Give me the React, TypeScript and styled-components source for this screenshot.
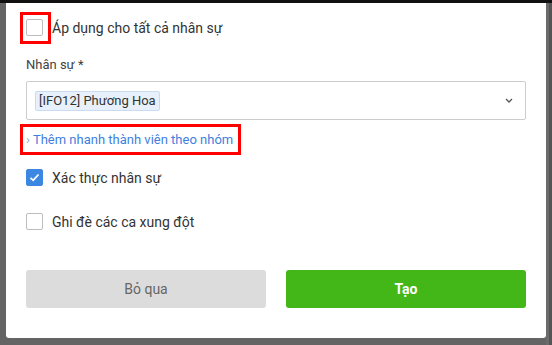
import styled, { createGlobalStyle } from "styled-components";

const GlobalStyle = createGlobalStyle`
  html, body {
    margin: 0;
    padding: 0;
    background: #646464;
  }
  body {
    font-family: Roboto, "Liberation Sans", Arial, sans-serif;
  }
  * {
    box-sizing: border-box;
  }
`;

const Screen = styled.div`
  width: 552px;
  height: 345px;
  display: flex;
  flex-direction: column;
  background: #646464;
  overflow: hidden;
`;

const TopBar = styled.div`
  height: 3px;
  background: #111111;
  flex-shrink: 0;
`;

const Body = styled.div`
  flex: 1;
  display: flex;
  flex-direction: row;
`;

const Modal = styled.div`
  width: 540px;
  height: 335px;
  margin-left: 6px;
  background: #ffffff;
  border-radius: 0 0 3px 3px;
  padding: 9px 20px 0 20px;
  display: flex;
  flex-direction: column;
`;

const Scrollbar = styled.div`
  width: 6px;
  background: linear-gradient(to right, #6b6b6b 0 3px, #555555 3px 6px);
`;

const Row = styled.div<{ mt?: number; height?: number }>`
  display: flex;
  flex-direction: row;
  align-items: center;
  margin-top: ${(p) => p.mt || 0}px;
  height: ${(p) => (p.height ? `${p.height}px` : "auto")};
`;

// red annotation frame drawn around a part of the form
const Marker = styled.div<{ width: number; height: number }>`
  width: ${(p) => p.width}px;
  height: ${(p) => p.height}px;
  margin-left: -6px;
  border: 3px solid #ff0000;
  padding-left: 3px;
  display: flex;
  align-items: center;
`;

const CheckMarker = styled(Marker)`
  align-items: flex-start;
  padding-top: 4px;
`;

const Box = styled.span<{ checked?: boolean }>`
  width: 17px;
  height: 17px;
  flex-shrink: 0;
  border-radius: 2px;
  border: 1px solid ${(p) => (p.checked ? "#3b87e2" : "#bdbdbd")};
  background: ${(p) => (p.checked ? "#3b87e2" : "#ffffff")};
  display: flex;
  align-items: center;
  justify-content: center;
`;

const OptionText = styled.span<{ ml?: number }>`
  margin-left: ${(p) => p.ml ?? 9}px;
  font-size: 14px;
  color: #333333;
  white-space: nowrap;
`;

const Label = styled.div`
  margin-top: 13px;
  font-size: 13px;
  line-height: 16px;
  color: #3f3f3f;
`;

const Select = styled.div`
  margin-top: 8px;
  height: 39px;
  border: 1px solid #cccccc;
  border-radius: 2px;
  padding: 0 12px 0 8px;
  display: flex;
  align-items: center;
  justify-content: space-between;
`;

const Tag = styled.span`
  height: 20px;
  padding: 0 3px;
  background: #e8f1fb;
  border: 1px solid #c8dbf1;
  border-radius: 2px;
  font-size: 13px;
  line-height: 18px;
  color: #333333;
  white-space: nowrap;
`;

const QuickLink = styled.a`
  font-size: 13px;
  color: #3f7fe0;
  text-decoration: none;
  white-space: nowrap;
`;

const Arrow = styled.span`
  color: #8aa8d8;
  margin-right: 3px;
`;

const Actions = styled.div`
  margin-top: 40px;
  display: grid;
  grid-template-columns: 240px 240px;
  column-gap: 20px;
`;

const Button = styled.button<{ primary?: boolean }>`
  height: 38px;
  border: none;
  border-radius: 3px;
  font-family: inherit;
  font-size: 14px;
  font-weight: ${(p) => (p.primary ? 700 : 400)};
  color: ${(p) => (p.primary ? "#ffffff" : "#666666")};
  background: ${(p) => (p.primary ? "#43b618" : "#dcdcdc")};
`;

const Check = () => (
  <svg width="11" height="9" viewBox="0 0 11 9">
    <polyline points="1.5,4.8 4.2,7.3 9.5,1.5" fill="none" stroke="#fff" strokeWidth="1.8" />
  </svg>
);

const Chevron = () => (
  <svg width="8" height="5" viewBox="0 0 8 5">
    <polyline points="1,1 4,4 7,1" fill="none" stroke="#555" strokeWidth="1.3" />
  </svg>
);

export default function App() {
  return (
    <>
      <GlobalStyle />
      <Screen>
        <TopBar />
        <Body>
          <Modal>
            <Row height={32}>
              <CheckMarker width={31} height={32}>
                <Box />
              </CheckMarker>
              <OptionText ml={1}>Áp dụng cho tất cả nhân sự</OptionText>
            </Row>
            <Label>Nhân sự *</Label>
            <Select>
              <Tag>[IFO12] Phương Hoa</Tag>
              <Chevron />
            </Select>
            <Row mt={4}>
              <Marker width={221} height={31}>
                <QuickLink>
                  <Arrow>›</Arrow>Thêm nhanh thành viên theo nhóm
                </QuickLink>
              </Marker>
            </Row>
            <Row mt={14} height={17}>
              <Box checked>
                <Check />
              </Box>
              <OptionText>Xác thực nhân sự</OptionText>
            </Row>
            <Row mt={27} height={17}>
              <Box />
              <OptionText>Ghi đè các ca xung đột</OptionText>
            </Row>
            <Actions>
              <Button>Bỏ qua</Button>
              <Button primary>Tạo</Button>
            </Actions>
          </Modal>
          <Scrollbar />
        </Body>
      </Screen>
    </>
  );
}
